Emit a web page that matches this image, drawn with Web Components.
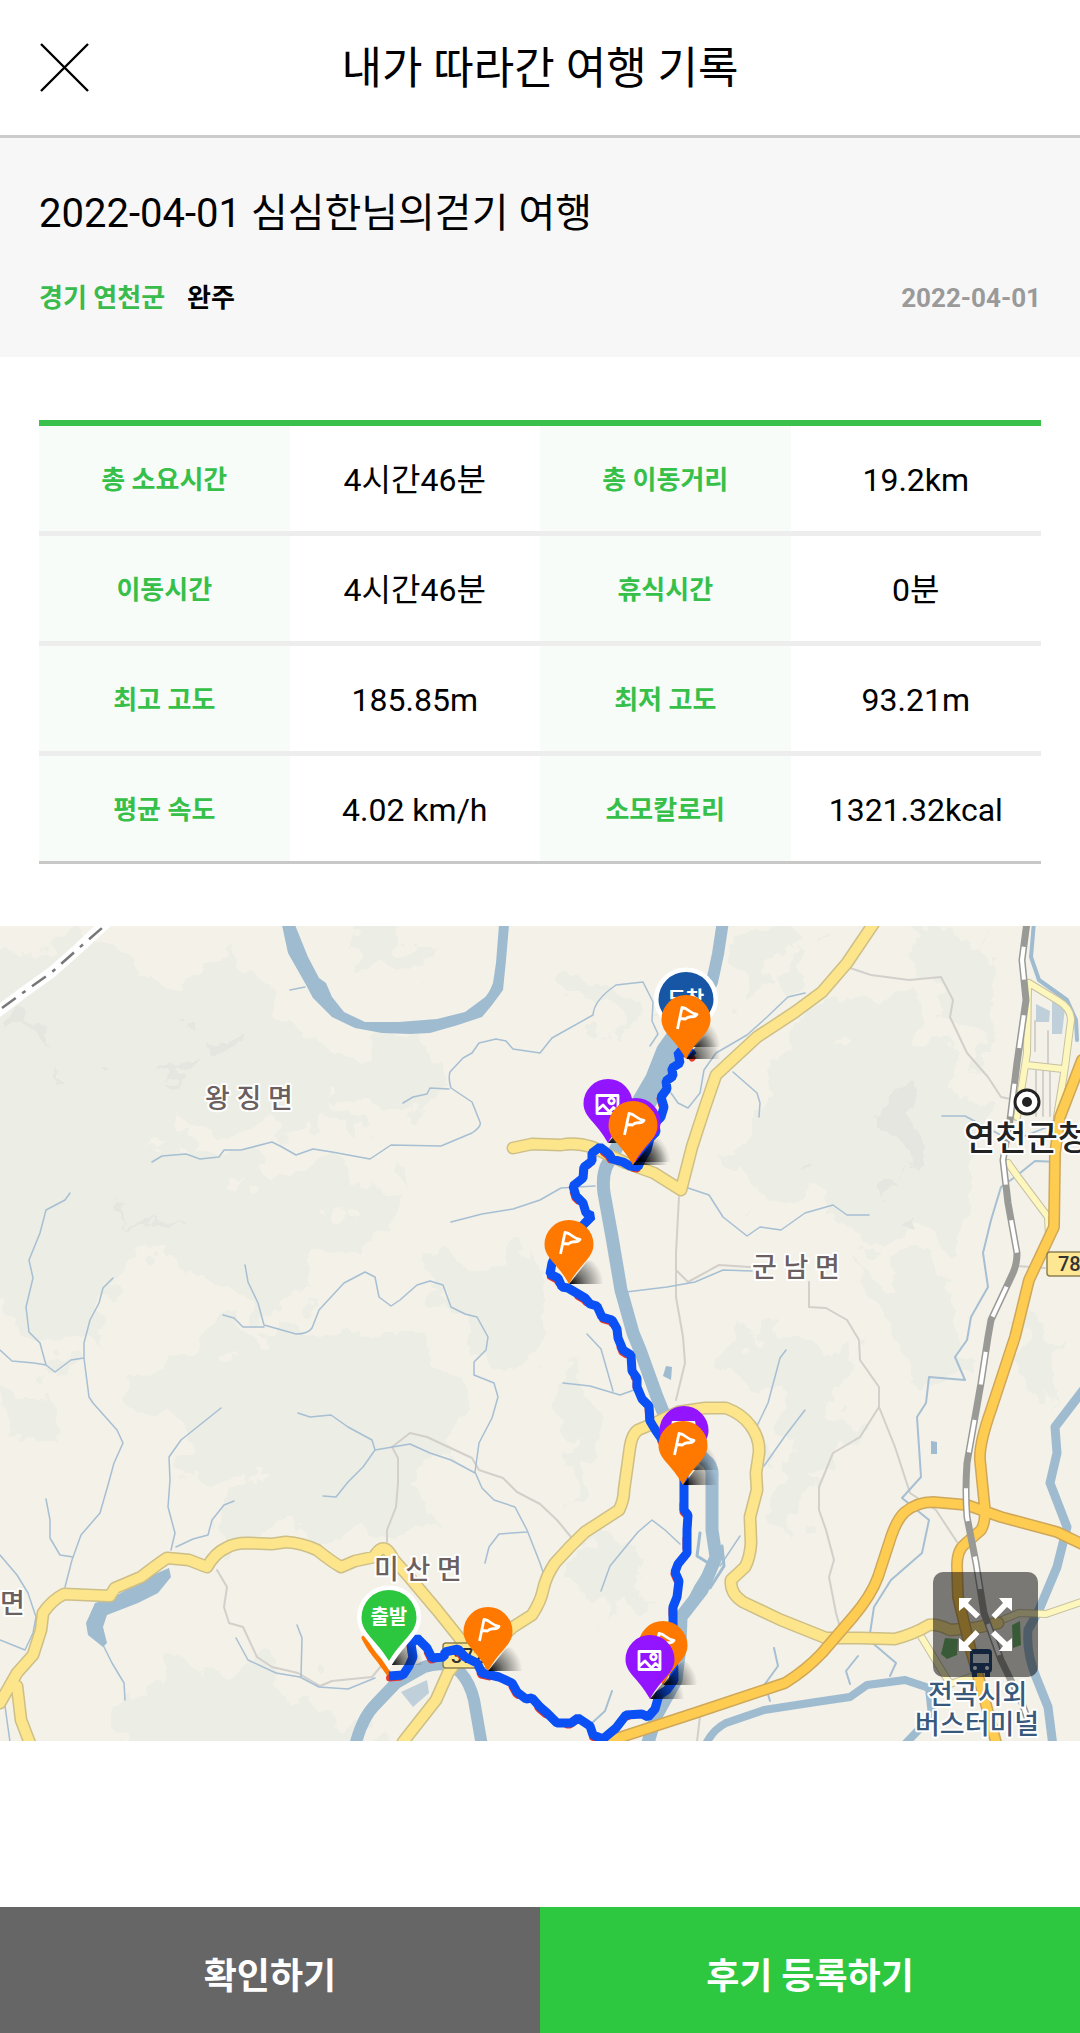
<!DOCTYPE html>
<html lang="ko">
<head>
<meta charset="UTF-8">
<meta name="viewport" content="width=device-width, initial-scale=1">
<title>내가 따라간 여행 기록</title>
<style>
    body {
        margin: 0;
        background: #fff;
        color: #000;
        font-family: Roboto, "Noto Sans CJK KR", sans-serif;
    }
</style>
</head>
<body>
<trip-app>
    <trip-header slot="header">내가 따라간 여행 기록</trip-header>
    <trip-summary region="경기 연천군" status="완주" date="2022-04-01">2022-04-01 심심한님의걷기 여행</trip-summary>
    <trip-stats></trip-stats>
    <trip-map>
        <map-pin type="end" style="left: 63.5%; top: 14.3%">도착</map-pin>
        <map-pin type="flag" style="left: 63.5%; top: 16.3%"></map-pin>
        <map-pin type="photo" style="left: 56.3%; top: 26.6%"></map-pin>
        <map-pin type="photo" style="left: 58.9%; top: 28.9%"></map-pin>
        <map-pin type="flag" style="left: 58.6%; top: 29.3%"></map-pin>
        <map-pin type="flag" style="left: 52.7%; top: 43.9%"></map-pin>
        <map-pin type="photo" style="left: 63.3%; top: 66.8%"></map-pin>
        <map-pin type="flag" style="left: 63.2%; top: 68.6%"></map-pin>
        <map-pin type="flag" style="left: 61.4%; top: 93.1%"></map-pin>
        <map-pin type="photo" style="left: 60.2%; top: 94.9%"></map-pin>
        <map-pin type="flag" style="left: 45.2%; top: 91.4%"></map-pin>
        <map-pin type="start" style="left: 36%; top: 90.2%">출발</map-pin>
    </trip-map>
    <action-bar slot="footer">
        <action-button>확인하기</action-button>
        <action-button variant="primary">후기 등록하기</action-button>
    </action-bar>
</trip-app>

<script>
// page shell
class TripApp extends HTMLElement {
    constructor() {
        super();
        this.attachShadow({ mode: 'open' });
    }

    connectedCallback() {
        this.shadowRoot.innerHTML = `
            <style>
                :host {
                    display: flex;
                    flex-direction: column;
                    min-height: 100vh;
                }
                main {
                    flex: 1;
                }
            </style>
            <slot name="header"></slot>
            <main><slot></slot></main>
            <slot name="footer"></slot>
        `;
    }
}

class TripHeader extends HTMLElement {
    constructor() {
        super();
        this.attachShadow({ mode: 'open' });
    }

    connectedCallback() {
        this.shadowRoot.innerHTML = `
            <style>
                :host {
                    display: block;
                    border-bottom: 3px solid #ccc;
                }
                header {
                    display: grid;
                    grid-template-columns: 50px 1fr 50px;
                    align-items: center;
                    height: 135px;
                    padding: 0 39px;
                }
                button {
                    display: flex;
                    padding: 0;
                    border: 0;
                    background: none;
                }
                h1 {
                    margin: 0;
                    padding-top: 2px;
                    font-size: 44px;
                    font-weight: 400;
                    line-height: 56px;
                    text-align: center;
                }
            </style>
            <header>
                <button type="button" aria-label="닫기">
                    <svg width="50" height="50" viewBox="0 0 50 50" stroke="#000" stroke-width="2.4">
                        <path d="M2 1 49 48M49 1 2 48"/>
                    </svg>
                </button>
                <h1><slot></slot></h1>
            </header>
        `;
    }
}

class TripSummary extends HTMLElement {
    constructor() {
        super();
        this.attachShadow({ mode: 'open' });
    }

    connectedCallback() {
        this.shadowRoot.innerHTML = `
            <style>
                :host {
                    display: block;
                    padding: 47px 39px 39px;
                    background: #f7f7f7;
                }
                h2 {
                    margin: 0 0 35px;
                    font-size: 40px;
                    font-weight: 400;
                    line-height: 58px;
                }
                .meta {
                    display: flex;
                    gap: 22px;
                    font-size: 26px;
                    font-weight: 700;
                    line-height: 40px;
                }
                .region {
                    color: #3abb4d;
                }
                time {
                    margin-left: auto;
                    color: #9a9a9a;
                }
            </style>
            <h2><slot></slot></h2>
            <div class="meta">
                <span class="region">${this.getAttribute('region')}</span>
                <span>${this.getAttribute('status')}</span>
                <time>${this.getAttribute('date')}</time>
            </div>
        `;
    }
}

class TripStats extends HTMLElement {
    constructor() {
        super();
        this.attachShadow({ mode: 'open' });
        this.rows = [
            ['총 소요시간', '4시간46분', '총 이동거리', '19.2km'],
            ['이동시간', '4시간46분', '휴식시간', '0분'],
            ['최고 고도', '185.85m', '최저 고도', '93.21m'],
            ['평균 속도', '4.02 km/h', '소모칼로리', '1321.32kcal']
        ];
    }

    connectedCallback() {
        const rows = this.rows.map(r => `
            <tr>
                <th scope="row">${r[0]}</th><td>${r[1]}</td>
                <th scope="row">${r[2]}</th><td>${r[3]}</td>
            </tr>
        `).join('');

        this.shadowRoot.innerHTML = `
            <style>
                :host {
                    display: block;
                    padding: 63px 39px 62px;
                }
                table {
                    width: 100%;
                    table-layout: fixed;
                    border-spacing: 0;
                    border-top: 6px solid #39c14b;
                    border-bottom: 3px solid #c8c8c8;
                }
                th, td {
                    height: 103px;
                    padding: 2px 0 0;
                    border-bottom: 5px solid #ededed;
                    text-align: center;
                    line-height: 40px;
                }
                tr:last-child > * {
                    border-bottom: 0;
                }
                th {
                    background: #f7fcf8;
                    color: #36c04a;
                    font-size: 26px;
                    font-weight: 700;
                }
                td {
                    font-size: 32px;
                }
            </style>
            <table><tbody>${rows}</tbody></table>
        `;
    }
}

// marker; the host's left/top is the tip of the pin
class MapPin extends HTMLElement {
    constructor() {
        super();
        this.attachShadow({ mode: 'open' });
    }

    connectedCallback() {
        const type = this.getAttribute('type');
        const big = type === 'start' || type === 'end';
        const fill = { start: '#2dc63f', end: '#1755a5', flag: '#ff7800', photo: '#9314ff' }[type];
        const icons = {
            flag: '<path d="M16 34 20.500 12.500C27 13 28 18.500 35.500 19.500 32 24.500 28 19 24 24L18.500 23.500"/>',
            photo: '<path d="M13.500 16.500h21v18h-21zM14 31l5.500-5 6.500 7 4-4.500 4 3.500"/><circle cx="28" cy="22" r="2.800"/>'
        };
        const shape = big
            ? '<path d="M27.500 0A27.500 27.500 0 0 1 55 27.500C55 43 40 50 27.500 71 15 50 0 43 0 27.500A27.500 27.500 0 0 1 27.500 0Z" stroke="#fff" stroke-width="9" paint-order="stroke"/>'
            : '<path d="M24.500 0A24.500 24.500 0 0 1 49 24.500C49 38 36 43 24.500 64 13 43 0 38 0 24.500A24.500 24.500 0 0 1 24.500 0Z"/>';

        this.shadowRoot.innerHTML = `
            <style>
                :host {
                    display: block;
                    position: absolute;
                    width: ${big ? 55 : 49}px;
                    height: ${big ? 71 : 64}px;
                    transform: translate(-50%, -100%);
                }
                svg {
                    display: block;
                    overflow: visible;
                }
                span {
                    position: absolute;
                    inset: 12px 0 auto;
                    color: #fff;
                    font-size: 20px;
                    font-weight: 700;
                    line-height: 30px;
                    text-align: center;
                }
            </style>
            <svg width="100%" height="100%">
                <defs>
                    <radialGradient id="shade" gradientUnits="userSpaceOnUse" cx="27" cy="64" r="32">
                        <stop offset="0" stop-color="#000" stop-opacity="0.950"/>
                        <stop offset="0.400" stop-color="#000" stop-opacity="0.500"/>
                        <stop offset="1" stop-color="#000" stop-opacity="0"/>
                    </radialGradient>
                </defs>
                <path transform="translate(${big ? 3 : 0} ${big ? 11 : 0})" d="M24.500 64 42 42C52 36 64 46 60 64Z" fill="url(#shade)"/>
                <g fill="${fill}">${shape}</g>
                <g fill="none" stroke="#fff" stroke-width="2.800" stroke-linejoin="round">${icons[type] || ''}</g>
            </svg>
            ${big ? '<span><slot></slot></span>' : ''}
        `;
    }
}

class TripMap extends HTMLElement {
    constructor() {
        super();
        this.attachShadow({ mode: 'open' });
    }

    // a road is drawn twice, a dark casing under the coloured surface
    road(cls, paths) {
        const d = paths.join('');
        return `<path class="${cls} casing" d="${d}"/><path class="${cls}" d="${d}"/>`;
    }

    connectedCallback() {
        const yellow = [
            'M0 777 17 747 33 729 41 704 43 687Q52 674 64 668L110 670 115 662 141 651Q158 638 167 632L189 634 207 641Q215 627 226 622 234 617 248 617L272 618 286 616Q302 617 317 624 332 636 341 641L355 635 374 631Q382 617 389 626L394 634 410 652 437 684 461 714 458 734 448 747 436 774 403 816',
            'M17 760 21 794 31 820',
            'M482 730 513 701 532 689Q541 675 543 664 546 650 555 637 570 620 585 606L619 584Q624 574 624 564L630 521Q632 508 638 504L657 496 678 486 705 482H726Q742 488 750 499 760 512 759 527L756 547 757 564 750 591 751 617Q750 632 745 641L731 654Q730 668 743 676L781 694 826 712H860L895 713Q914 708 929 699 938 698 950 704L975 702 998 697',
            'M876-6 847 37 822 66 795 86 757 111 716 149 705 181 692 221 681 264 654 247 626 237 592 221Q575 216 561 219L532 218 513 222'
        ];
        const pale = [
            'M1029 57 1057 74Q1071 82 1071 94L1065 141 1057 191M1028 60 1027 127 1017 191M1027 139 1063 143',
            'M1008 237 1018 251 1048 291 1049 310M919 707 950 758 974 750',
            'M990 699 1019 687 1046 688 1084 675'
        ];
        const orange = [
            'M1082 134 1060 191 1055 227 1054 301 1029 354 1015 411 991 484Q979 518 980 534L985 584Q985 598 981 604L965 618Q957 624 957 640L958 671 970 721 984 771 997 820',
            'M606 816 695 787 785 757Q806 744 822 727L853 691Q871 670 878 651L891 611Q897 593 905 586 917 576 933 576L967 579 1001 591 1057 606 1084 619'
        ];
        const rail = 'M1027-4 1022 34 1026 74 1017 137 1010 194 1003 234 1008 277 1017 327Q1017 338 1013 347L991 394 988 411 981 457 967 537Q965 565 967 591L976 637 984 687 1001 734 1022 777 1030 800';
        const route = [
            'M693 130 690 126 678 126 680 137 672 142 673 150 666 155 667 163 661 171 664 181 661 191 655 197 656 206 650 212 647 224 641 234 638 241 630 240 623 236 612 233 609 228 600 221 592 227 592 235 584 241 583 252 573 260 576 270 583 277 586 287 592 290 585 297 575 308 558 325 552 337 550 348 558 352 562 361 568 362 585 372 590 378 597 380 602 391 612 394 617 403 618 412 623 424 631 429 632 445 637 452 637 461 642 473 649 480 650 495 656 505 663 515 684 540',
            'M684 540 684 584 688 589 687 604 687 627 678 638 675 646 679 655 677 671 673 681 673 697 674 754 667 764 659 769 655 783 648 791 642 788 626 789 616 802 603 813 593 809 590 800 578 792 571 797 557 797 547 787 540 781 532 772 526 773 517 766 512 757 499 751 482 747 477 737 465 731 458 723 445 726 444 731 432 732 427 722 417 712 411 718 413 731 409 740 403 749 389 750'
        ].join('');

        this.shadowRoot.innerHTML = `
            <style>
                :host {
                    display: block;
                    position: relative;
                    overflow: hidden;
                }
                .map {
                    display: block;
                    width: 100%;
                    height: auto;
                    background: #f3f1e8;
                }
                .map path { fill: none; stroke-linejoin: round; stroke-linecap: round; }
                .map .hill { fill: #ecede5; }
                .map .peak { fill: #e4e6df; }
                .map .lake { fill: #9fbbd0; }
                .map .river { stroke: #9fbbd0; stroke-width: 9; }
                .map .stream { stroke: #a6bfd3; stroke-width: 1.5; }
                .map .lane { stroke: #d3cfca; stroke-width: 2; }
                .map .yellow { stroke: #fde58c; stroke-width: 10; }
                .map .yellow.casing { stroke: #cdbf86; stroke-width: 13; }
                .map .pale { stroke: #fdf6bd; stroke-width: 6; }
                .map .pale.casing { stroke: #c6c1a4; stroke-width: 8; }
                .map .orange { stroke: #fecc50; stroke-width: 9; }
                .map .orange.casing { stroke: #cfa75a; stroke-width: 12; }
                .map .flat { stroke-linecap: butt; }
                .map .park { fill: #73b56d; }
                .place text {
                    fill: #6b5f5f;
                    stroke: #fff;
                    stroke-width: 4px;
                    paint-order: stroke;
                    stroke-linejoin: round;
                    font-size: 27px;
                    font-weight: 500;
                }
                .place .city { fill: #222; font-size: 34px; }
                .place .stop { fill: #38597c; }
                .place .sign { fill: #333; stroke: none; font-size: 20px; }
                .expand {
                    display: flex;
                    position: absolute;
                    right: 42px;
                    bottom: 64px;
                    padding: 0;
                    border: 0;
                    border-radius: 10px;
                    background: rgba(0, 0, 0, 0.5);
                }
            </style>
            <svg class="map" viewBox="0 0 1080 815" role="img" aria-label="이동 경로 지도">
                <defs>
                    <filter id="rough" x="-10%" y="-10%" width="120%" height="120%">
                        <feTurbulence type="fractalNoise" baseFrequency="0.020" numOctaves="4" seed="4"/>
                        <feDisplacementMap in="SourceGraphic" scale="90" xChannelSelector="R" yChannelSelector="G"/>
                    </filter>
                </defs>

                <g filter="url(#rough)">
                    <path class="hill" d="M-30 30 60 20 110 30 130 50 180 50 240 40 280 70 300 120 340 130 440 120 440 170 340 180 370 200 250 205 180 200 170 225 240 240 350 250 400 290 310 320 330 370 250 400 180 330 120 350 90 440 30 420-30 330Z"/>
                    <path class="hill" d="M350 10 420 10 410 40 370 35ZM390 240 420 240 410 270ZM430 320 530 330 540 430 500 440 440 370ZM180 420 330 400 450 430 460 520 400 560 430 620 300 600 220 610 250 540 200 560 190 520 130 470ZM0 460 60 450 70 520 30 530ZM130 770 250 730 330 790 420 840 120 840Z"/>
                    <path class="hill" d="M740 20 820 10 800 60 750 70ZM900 10 990 0 990 140 930 60ZM800 90 920 80 990 190 960 330 860 310 800 270 740 280 760 180 780 130ZM860 330 960 360 960 450 900 440ZM720 400 850 420 850 500 790 610 770 560 790 480 720 460ZM580 600 640 620 650 680 600 700ZM1000 400 1080 420 1040 480ZM560 60 640 70 630 120ZM560 420 610 500 570 560Z"/>
                </g>
                <g filter="url(#rough)">
                    <path class="peak" d="M0 95 45 100 40 115 0 112ZM195 105 235 105 210 122ZM105 135 125 140 110 150ZM150 145 185 140 165 155ZM120 285 170 290 150 300ZM880 175 915 178 922 230 905 255 885 220ZM800 248 820 250 810 258ZM900 300 920 310 910 330ZM55 135 70 150 60 152Z"/>
                </g>

                <path class="lane" d="M387 616V604L396 581 398 557V532L392 521 410 507 427 511 472 532 479 544 503 552 517 566 540 578 557 594 571 611M217 644 227 661 224 681 229 697 243 701 257 731 272 741 298 747 320 760 332 755 372 751 382 739M679 271 676 327V371L683 411 685 437 676 474M676 344 688 356 719 339 750 341M809 356V381L826 382 847 394 859 414 860 434 879 461V481L895 521 910 567 936 584 957 616M879 481 860 511 833 527 819 561V584L826 604 834 634 829 651 836 687 840 701M847 41 871 49 909 54 941 51 953 74 950 91 967 127 988 151 1001 171 1015 174M1036 145V190M1043 145V190M1050 145V190M1035 95V125M1048 105V138M1017 340 1045 342M700 790 697 816"/>
                <path class="stream" d="M152 236 162 230 186 228 200 233 219 231 224 224 241 224 272 216 282 221 296 229 313 223 332 226 370 233 391 219 441 220 472 207Q482 200 480 196L472 176 451 162Q448 152 450 146L463 132 472 127 479 117 496 113 506 115 513 123 540 127 552 112 593 89Q594 74 616 59L643 56 647 64 653 76 652 95 658 108 650 120M403 177 413 171 427 168 430 162 449 163"/>
                <path class="stream" d="M70 267 65 274 46 284 40 307 29 334 33 352 26 381 29 406 40 417 46 439 55 446 71 434 84 432 89 471 93 477 117 504 123 517 114 537 108 559 100 587 81 609 72 634 65 661M84 432V417L90 394 99 377 103 362 113 352M0 424 12 435 34 437 46 439M46 573 50 594V612L60 629 73 631M221 482 181 514 169 531 170 554 168 581 175 607 171 624M234 575 224 579 212 594 208 609 193 613 176 621"/>
                <path class="stream" d="M245 339 248 356 258 377 264 399 296 408Q308 408 312 402L319 384 344 357 365 346 375 351 379 371 391 380 400 374 417 359 430 355 443 359 451 381 465 388 477 391 488 411 486 424 474 436V449L494 457 498 471 492 492 479 517 475 546 482 562 494 574 515 581 527 604 540 637 545 652M223 389 234 392 243 401 264 401M298 487 310 491 331 489 348 501 372 514 375 524 410 518 430 527 451 534 475 547M323 570 336 571 348 556 363 541 375 524M451 296 482 288 513 283 540 274 561 262 595 260M485 637 489 621 499 608 527 606"/>
                <path class="stream" d="M103 719 112 737 124 757 125 774M236 712 248 734 276 747 300 751 319 761 348 763 375 752M297 699 302 712 301 751M0 629 17 649 28 667 36 691 33 707 25 724 0 714M5 780 10 816M290 64 305 61M601 665 610 640 633 612 638 606 652 594 665 604 680 618"/>
                <path class="stream" d="M805 67 788 71 767 91 747 109 716 127 704 144 700 167 688 182 678 177 671 167M733 146 757 167 760 177 759 191M688 262 709 269 723 291 747 310 760 301 781 304 805 287 833 279 847 289 869 289M626 366 667 361 695 356 723 344 752 345M757 500 768 477 780 432 786 424M764 540 785 510 805 484M587 408 601 423 613 465M563 457 590 460 620 469 634 464M720 640 740 610M847 41 830 50M942 190 965 190 1012 215 1050 200 1067 170"/>
                <path class="stream" d="M1060 236 1035 235 1015 251 1001 261 991 294 983 327 988 361 971 391 967 414 955 431 965 454 929 451 926 477 917 491 921 551 902 572 929 594 922 627 891 654 874 681 869 714 896 737 890 750M858 730 846 745 850 758M774 722 778 740 765 758 770 775M612 765 605 785 592 797" style="stroke-width: 2"/>

                <path class="lake" d="M282-1 288 27 305 57 313 72 332 91 355 102 382 107 410 108 430 107 458 99 482 91 492 79 503 64 506 34 509-1H499L496 37 493 57Q489 68 484 72L465 86 437 93 399 96H365L344 86 332 71 326 57 319 52 308 31 295-1Z"/>
                <path class="lake" d="M95 677 86 697 88 709 103 721 107 717 103 701 107 689 138 677 158 667 171 651 169 642 148 651 114 671ZM666 440 672 441 671 454 663 450ZM931 515 937 516V528H931Z"/>
                <path class="lake" d="M401 766 427 754 429 767 413 781ZM1036 78 1050 85 1049 96H1036ZM1052 72 1065 82 1062 108H1052Z" style="opacity: .6"/>
                <path class="river" d="M723-5 718 28 712 56 694 92 672 117" style="stroke-width: 12"/>
                <path class="river flat" d="M688 98 668 126 657 154 636 190" style="stroke-width: 24"/>
                <path class="river" d="M645 175 623 210 606 241Q602 252 604 267L612 311 621 364 633 407 640 424 657 471 668 498 705 534Q713 540 712 551V604L716 631 702 664 681 691 680 720 676 754 656 790 647 820" style="stroke-width: 13"/>
                <path class="river" d="M700 607 697 630 710 638 696 660 690 672M722 620 724 640 710 662M712 570V640" style="stroke-width: 3"/>
                <path class="river" d="M355 820Q362 792 375 779L396 757 424 741Q448 733 461 747 470 757 474 774L482 820" style="stroke-width: 12"/>
                <path class="river" d="M1084 463 1055 501 1057 527 1050 557 1067 601 1057 641 1039 684 1028 704Q1026 726 1036 751L1048 781 1053 820"/>
                <path class="river" d="M705 820Q712 804 726 797L764 784 816 776 850 771 867 759 905 754 929 762 932 790 905 818" style="stroke-width: 8"/>
                <path class="river" d="M1034-4 1031 31 1039 54 1067 74 1076 94 1077 114" style="stroke-width: 4"/>
                <path class="park" d="M945 712 958 713 957 729 947 733 941 728ZM1012 699 1020 695 1021 719 1013 722Z"/>

                <path d="M-4 87 24 66 52 46 79 22 108-5" stroke="#fff" stroke-width="11"/>
                <path class="flat" d="M2 82 24 66 52 46 79 22 102 2" stroke="#777" stroke-width="2.5" stroke-dasharray="17 8 4 8"/>

                ${this.road('pale', pale)}
                ${this.road('yellow', yellow)}
                ${this.road('orange', orange)}
                <path class="flat" d="${rail}" stroke="#999a96" stroke-width="7"/>
                <path class="flat" d="${rail}" stroke="#fff" stroke-width="4" stroke-dasharray="33 36" stroke-dashoffset="-25"/>

                <g class="place">
                    <rect x="443" y="717" width="46" height="25" rx="3" fill="#fde792" stroke="#8d8150" stroke-width="1.500"/>
                    <text class="sign" x="451" y="737">372</text>
                    <rect x="1047" y="326" width="46" height="24" rx="3" fill="#fde792" stroke="#8d8150" stroke-width="1.500"/>
                    <text class="sign" x="1058" y="345">78</text>
                    <text x="205" y="182">왕 징 면</text>
                    <text x="752" y="351">군 남 면</text>
                    <text x="374" y="653">미 산 면</text>
                    <text x="0" y="687">면</text>
                    <text class="city" x="964" y="224">연천군청</text>
                    <circle cx="1027" cy="176" r="12" fill="#fff" stroke="#222" stroke-width="3"/>
                    <circle cx="1027" cy="176" r="5" fill="#222"/>
                    <text class="stop" x="928" y="778">전곡시외</text>
                    <text class="stop" x="915" y="808">버스터미널</text>
                </g>
                <g fill="#244a7a">
                    <rect x="970" y="723" width="22" height="24" rx="4"/>
                    <rect x="972" y="745" width="5" height="6"/>
                    <rect x="985" y="745" width="5" height="6"/>
                    <rect x="973" y="728" width="16" height="9" fill="#dde6f0"/>
                    <circle cx="975" cy="742" r="2" fill="#fff"/>
                    <circle cx="987" cy="742" r="2" fill="#fff"/>
                </g>

                <path d="M364 712Q370 724 379 734L389 748" stroke="#ff7800" stroke-width="5"/>
                <path d="${route}" stroke="#e8392b" stroke-width="7" transform="translate(-1 2)" stroke-dasharray="10 26"/>
                <path class="flat" d="${route}" stroke="#0a50f5" stroke-width="9" style="stroke-linejoin: bevel"/>
            </svg>
            <slot></slot>
            <button class="expand" type="button" aria-label="지도 확대">
                <svg width="105" height="105" viewBox="0 0 105 105" fill="#fff">
                    <path id="arrow" d="M26 26H39L35 31 47 42.500 43 46.500 31 35 26 39Z" style="fill: #fff"/>
                    <use href="#arrow" transform="rotate(90 52.500 52.500)"/>
                    <use href="#arrow" transform="rotate(180 52.500 52.500)"/>
                    <use href="#arrow" transform="rotate(270 52.500 52.500)"/>
                </svg>
            </button>
        `;
    }
}

class ActionBar extends HTMLElement {
    constructor() {
        super();
        this.attachShadow({ mode: 'open' });
    }

    connectedCallback() {
        this.shadowRoot.innerHTML = `
            <style>
                :host {
                    display: flex;
                }
                ::slotted(*) {
                    flex: 1;
                }
            </style>
            <slot></slot>
        `;
    }
}

class ActionButton extends HTMLElement {
    constructor() {
        super();
        this.attachShadow({ mode: 'open' });
    }

    connectedCallback() {
        this.shadowRoot.innerHTML = `
            <style>
                :host {
                    display: block;
                }
                button {
                    width: 100%;
                    height: 126px;
                    padding: 6px 0 0;
                    border: 0;
                    background: #666;
                    color: #fff;
                    font: inherit;
                    font-size: 36px;
                    font-weight: 700;
                }
                :host([variant="primary"]) button {
                    background: #2dc83f;
                }
            </style>
            <button type="button"><slot></slot></button>
        `;
    }
}

customElements.define('trip-app', TripApp);
customElements.define('trip-header', TripHeader);
customElements.define('trip-summary', TripSummary);
customElements.define('trip-stats', TripStats);
customElements.define('map-pin', MapPin);
customElements.define('trip-map', TripMap);
customElements.define('action-bar', ActionBar);
customElements.define('action-button', ActionButton);
</script>
</body>
</html>
